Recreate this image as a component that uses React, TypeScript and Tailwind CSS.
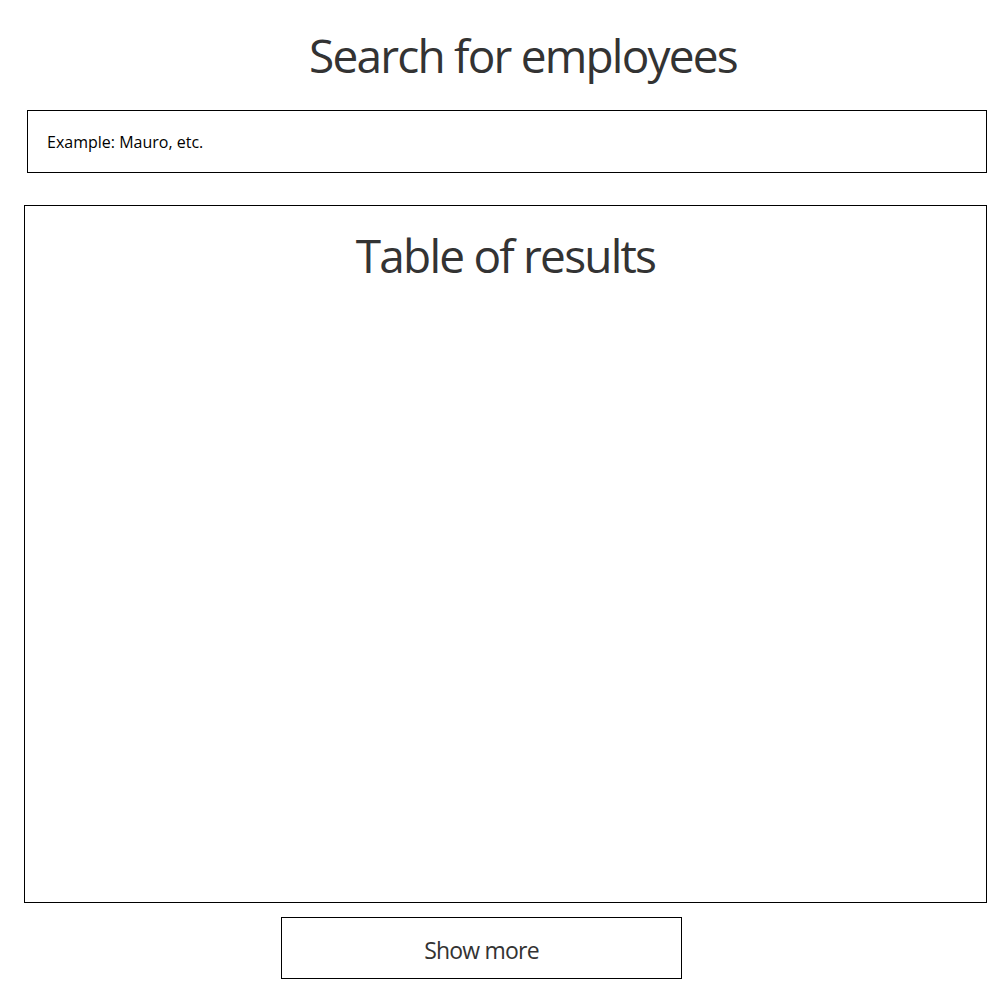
export default function App() {
  return (
    <div className="min-h-screen bg-white font-['Open_Sans',sans-serif] text-[#333333]">
      <div className="flex flex-col pt-[26px]">
        <h1 className="ml-[46px] text-center text-[46px] leading-[58px] tracking-[-1.8px]">
          Search for employees
        </h1>

        <div className="ml-[27px] mt-[26px] flex h-[63px] w-[960px] items-center border border-black px-[19px]">
          <span className="text-[16px] text-black">Example: Mauro, etc.</span>
        </div>

        <div className="ml-[24px] mt-[32px] h-[698px] w-[963px] border border-black">
          <h2 className="mt-[20px] text-center text-[46px] leading-[58px] tracking-[-1.8px]">
            Table of results
          </h2>
        </div>

        <button className="ml-[281px] mt-[14px] flex h-[62px] w-[401px] items-center justify-center border border-black pt-[4px] text-[23px] tracking-[-0.8px]">
          Show more
        </button>
      </div>
    </div>
  );
}
